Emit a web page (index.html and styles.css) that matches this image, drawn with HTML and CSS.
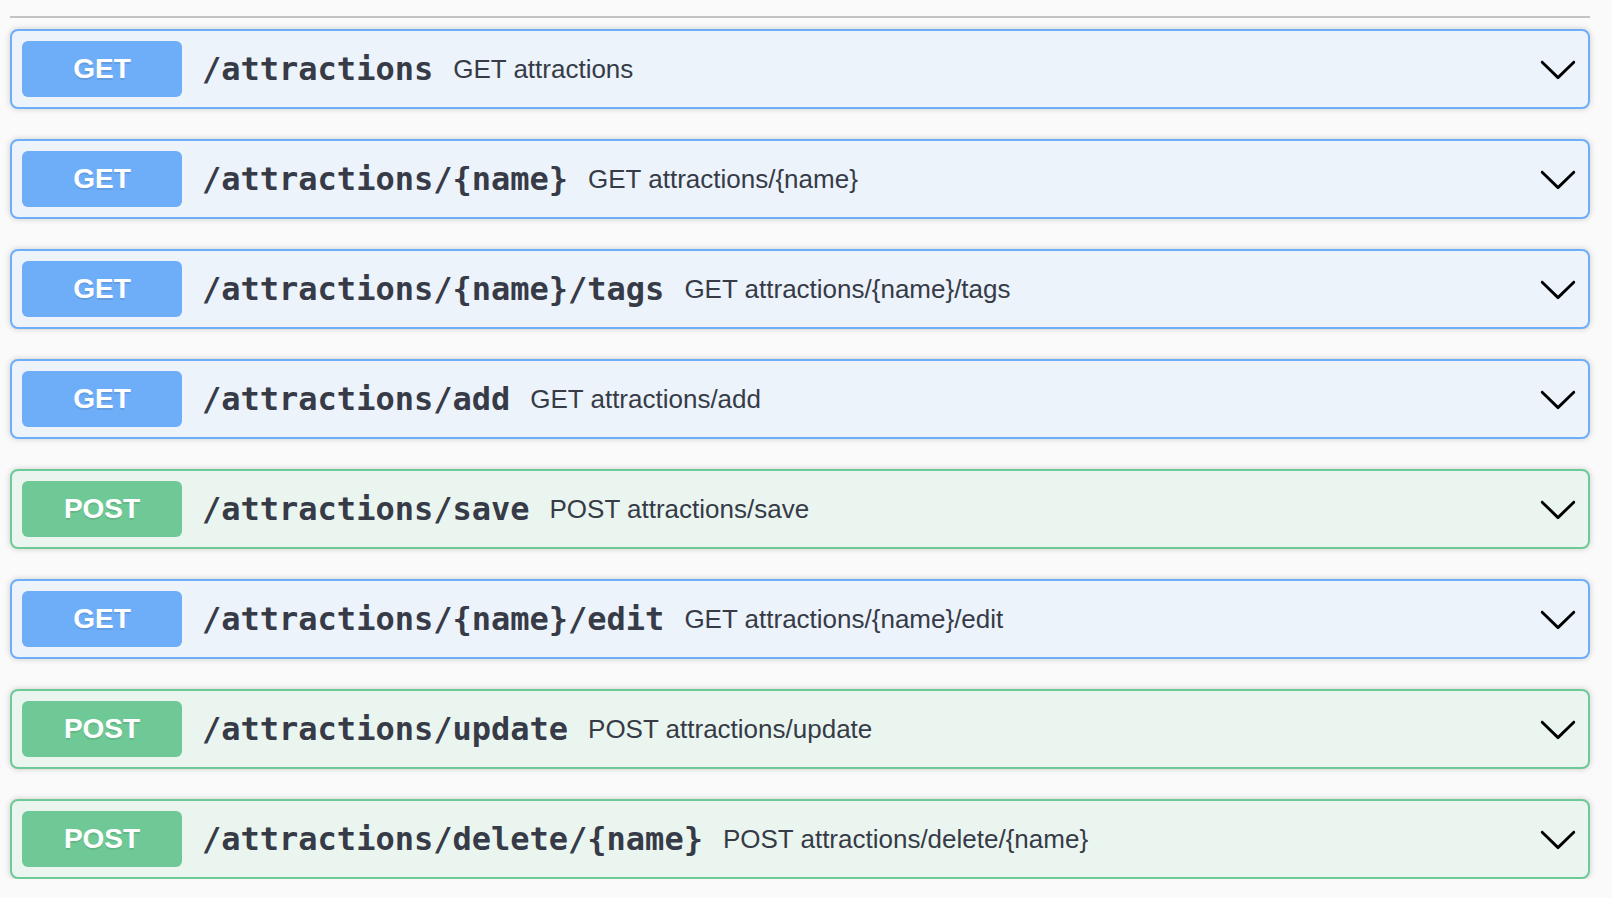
FILE: index.html
```html
<!DOCTYPE html>
<html lang="en">
<head>
<meta charset="utf-8">
<title>attractions</title>
<link rel="stylesheet" href="styles.css">
</head>
<body>
<div class="page">
  <div class="tag-line"></div>
  <div class="ops">
    <div class="opblock get">
      <span class="method">GET</span>
      <span class="path">/attractions</span>
      <span class="desc">GET attractions</span>
      <svg class="arrow" viewBox="0 0 20 20" width="40" height="40"><path d="M17.418 6.109c.272-.268.709-.268.979 0s.271.701 0 .969l-7.908 7.83c-.27.268-.707.268-.979 0l-7.908-7.83c-.27-.268-.27-.701 0-.969.271-.268.709-.268.979 0L10 13.25l7.418-7.141z"/></svg>
    </div>
    <div class="opblock get">
      <span class="method">GET</span>
      <span class="path">/attractions/{name}</span>
      <span class="desc">GET attractions/{name}</span>
      <svg class="arrow" viewBox="0 0 20 20" width="40" height="40"><path d="M17.418 6.109c.272-.268.709-.268.979 0s.271.701 0 .969l-7.908 7.83c-.27.268-.707.268-.979 0l-7.908-7.83c-.27-.268-.27-.701 0-.969.271-.268.709-.268.979 0L10 13.25l7.418-7.141z"/></svg>
    </div>
    <div class="opblock get">
      <span class="method">GET</span>
      <span class="path">/attractions/{name}/tags</span>
      <span class="desc">GET attractions/{name}/tags</span>
      <svg class="arrow" viewBox="0 0 20 20" width="40" height="40"><path d="M17.418 6.109c.272-.268.709-.268.979 0s.271.701 0 .969l-7.908 7.83c-.27.268-.707.268-.979 0l-7.908-7.83c-.27-.268-.27-.701 0-.969.271-.268.709-.268.979 0L10 13.25l7.418-7.141z"/></svg>
    </div>
    <div class="opblock get">
      <span class="method">GET</span>
      <span class="path">/attractions/add</span>
      <span class="desc">GET attractions/add</span>
      <svg class="arrow" viewBox="0 0 20 20" width="40" height="40"><path d="M17.418 6.109c.272-.268.709-.268.979 0s.271.701 0 .969l-7.908 7.83c-.27.268-.707.268-.979 0l-7.908-7.83c-.27-.268-.27-.701 0-.969.271-.268.709-.268.979 0L10 13.25l7.418-7.141z"/></svg>
    </div>
    <div class="opblock post">
      <span class="method">POST</span>
      <span class="path">/attractions/save</span>
      <span class="desc">POST attractions/save</span>
      <svg class="arrow" viewBox="0 0 20 20" width="40" height="40"><path d="M17.418 6.109c.272-.268.709-.268.979 0s.271.701 0 .969l-7.908 7.83c-.27.268-.707.268-.979 0l-7.908-7.83c-.27-.268-.27-.701 0-.969.271-.268.709-.268.979 0L10 13.25l7.418-7.141z"/></svg>
    </div>
    <div class="opblock get">
      <span class="method">GET</span>
      <span class="path">/attractions/{name}/edit</span>
      <span class="desc">GET attractions/{name}/edit</span>
      <svg class="arrow" viewBox="0 0 20 20" width="40" height="40"><path d="M17.418 6.109c.272-.268.709-.268.979 0s.271.701 0 .969l-7.908 7.83c-.27.268-.707.268-.979 0l-7.908-7.83c-.27-.268-.27-.701 0-.969.271-.268.709-.268.979 0L10 13.25l7.418-7.141z"/></svg>
    </div>
    <div class="opblock post">
      <span class="method">POST</span>
      <span class="path">/attractions/update</span>
      <span class="desc">POST attractions/update</span>
      <svg class="arrow" viewBox="0 0 20 20" width="40" height="40"><path d="M17.418 6.109c.272-.268.709-.268.979 0s.271.701 0 .969l-7.908 7.83c-.27.268-.707.268-.979 0l-7.908-7.83c-.27-.268-.27-.701 0-.969.271-.268.709-.268.979 0L10 13.25l7.418-7.141z"/></svg>
    </div>
    <div class="opblock post">
      <span class="method">POST</span>
      <span class="path">/attractions/delete/{name}</span>
      <span class="desc">POST attractions/delete/{name}</span>
      <svg class="arrow" viewBox="0 0 20 20" width="40" height="40"><path d="M17.418 6.109c.272-.268.709-.268.979 0s.271.701 0 .969l-7.908 7.83c-.27.268-.707.268-.979 0l-7.908-7.83c-.27-.268-.27-.701 0-.969.271-.268.709-.268.979 0L10 13.25l7.418-7.141z"/></svg>
    </div>
  </div>
</div>
</body>
</html>
```

FILE: styles.css
```css
html, body {
  margin: 0;
  padding: 0;
  background: #fafafa;
}

.page {
  width: 1580px;
  padding-left: 10px;
}

.tag-line {
  height: 16px;
  border-bottom: 2px solid #c4c4c4;
  margin-bottom: 11px;
}

.ops {
  display: flex;
  flex-direction: column;
  gap: 30px;
}

.opblock {
  box-sizing: border-box;
  height: 80px;
  display: flex;
  align-items: center;
  padding: 10px;
  border: 2px solid #6eaef8;
  border-radius: 8px;
  box-shadow: 0 0 6px rgba(0, 0, 0, 0.19);
  background: #ecf3fb;
}

.opblock.post {
  border-color: #6fc996;
  background: #ebf5f0;
}

.method {
  flex: none;
  width: 160px;
  height: 56px;
  line-height: 56px;
  text-align: center;
  border-radius: 6px;
  background: #6eaef8;
  color: #fff;
  font-family: "Liberation Sans", Arial, sans-serif;
  font-weight: 700;
  font-size: 28px;
  text-shadow: 0 2px 0 rgba(0, 0, 0, 0.1);
}

.opblock.post .method {
  background: #6fc996;
}

.path {
  flex: none;
  padding: 0 20px;
  font-family: "DejaVu Sans Mono", monospace;
  font-weight: 700;
  font-size: 32px;
  color: #363b47;
}

.desc {
  flex: 1 1 auto;
  font-family: "Liberation Sans", Arial, sans-serif;
  font-size: 26px;
  color: #363b47;
}

.arrow {
  flex: none;
  fill: #000;
}
```
